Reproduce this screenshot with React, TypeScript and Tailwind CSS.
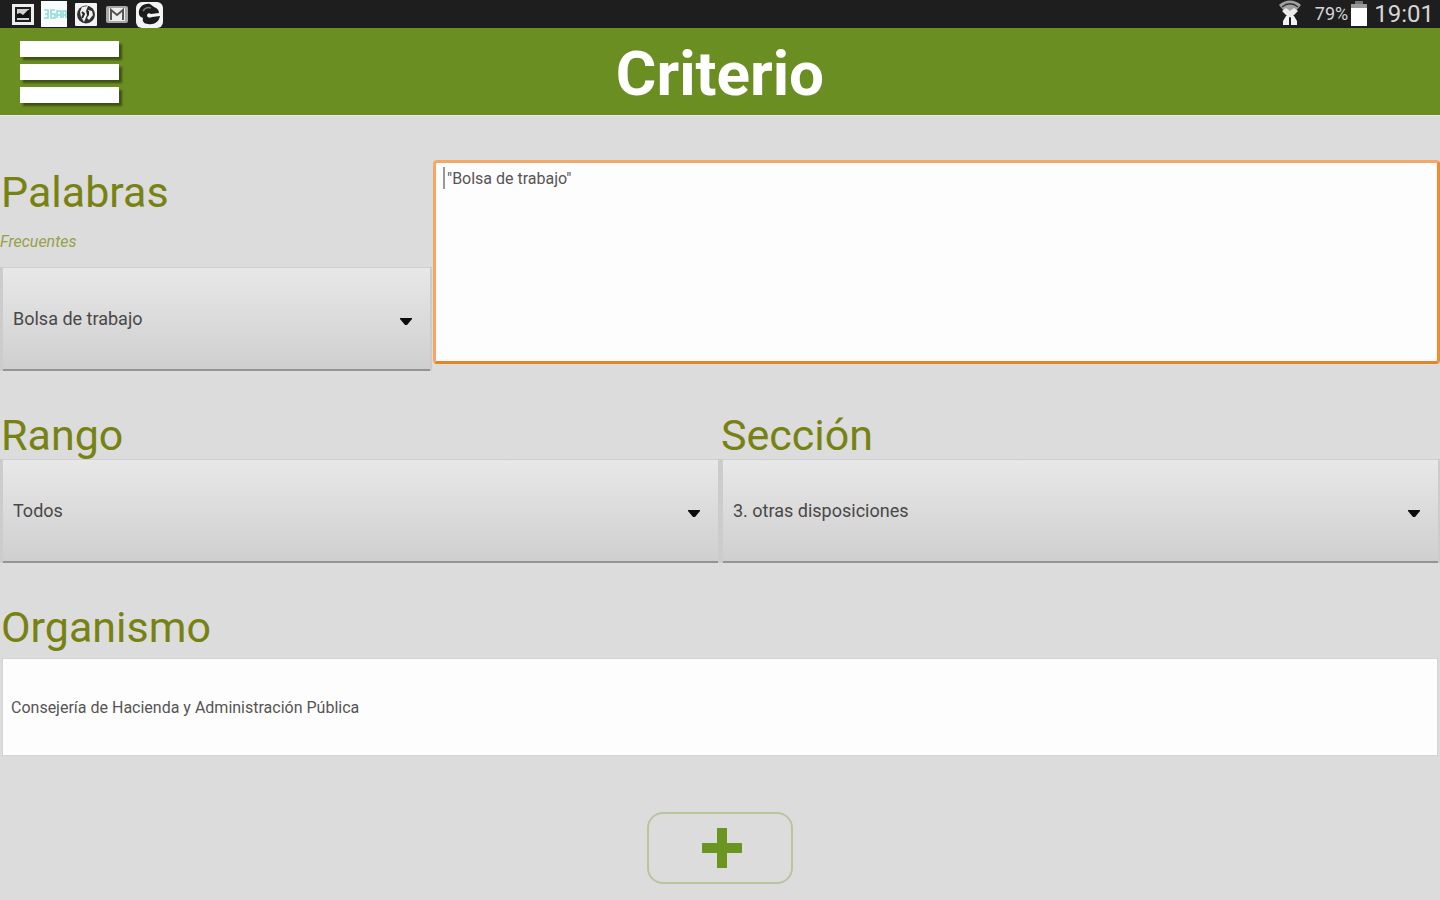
import React, { useState } from 'react'

const PALABRAS = ['Bolsa de trabajo', 'Oposiciones', 'Subvenciones', 'Becas']
const RANGOS = ['Todos', 'Ley', 'Decreto', 'Orden', 'Resolución']
const SECCIONES = ['1. disposiciones generales', '2. autoridades y personal', '3. otras disposiciones']

function StatusBar() {
  return (
    <div className="flex h-7 items-center justify-between bg-[#1e1e1e] pl-3 pr-[6px] text-[#d6d6d6]">
      <div className="flex items-center gap-[7px]">
        <svg width="22" height="22" viewBox="0 0 22 22" aria-hidden="true">
          <rect x="1.5" y="2.5" width="19" height="18" fill="#1e1e1e" stroke="#eee" strokeWidth="3" />
          <rect x="5" y="6" width="12" height="11" fill="#d0d0d0" />
          <path d="M5 15v-4l3-1 3 2 5-5h1v8z" fill="#111" />
        </svg>
        <svg width="26" height="26" viewBox="0 0 26 26" aria-hidden="true">
          <rect width="26" height="26" fill="#f8fcfc" />
          <path d="M3 9h4v4H4M7 13v4H3M14 9h-4v8h4v-4h-4M16 17v-7h4v7M16 14h4M22 17v-7h3v7M22 14h3" fill="none" stroke="#8fdcd6" strokeWidth="1.6" />
        </svg>
        <svg width="24" height="24" viewBox="0 0 24 24" aria-hidden="true">
          <rect x="1" y="1" width="22" height="23" rx="1" fill="#f4f4f4" />
          <circle cx="12" cy="12.500" r="9" fill="#303030" />
          <path d="M8 5l6-1-2 5 1 4-3 7-3-5-1-5z" fill="#f0f0f0" />
          <path d="M14 8l4 1 1 4-4 5-2-2 2-3z" fill="#f0f0f0" />
          <path d="M8 10l2 2-2 4M14 9v4" fill="none" stroke="#242424" strokeWidth="2" />
        </svg>
        <svg width="24" height="20" viewBox="0 0 24 20" aria-hidden="true">
          <rect x="1" y="2" width="22" height="17" rx="2" fill="#a8a8a8" />
          <rect x="4" y="4" width="16" height="13" fill="#eee" />
          <path d="M6 16V6l6 5 6-5v10" fill="none" stroke="#555" strokeWidth="2" />
        </svg>
        <svg width="27" height="27" viewBox="0 0 27 27" aria-hidden="true">
          <rect x="0" y="1" width="27" height="26" rx="6" fill="#f4f4f4" />
          <path d="M3 13C2 6 8 2 14 3l4 3c3 1 5 3 5 6l-8 1c-2-1-3-1-4 1 0 3 3 3 5 2l8-1c-1 6-6 9-12 8-4 0-6-3-5-6-2-1-4-2-4-4z" fill="#1c1c1c" />
          <path d="M7 10c2-3 5-4 8-3" fill="none" stroke="#777" strokeWidth="1.5" />
        </svg>
      </div>
      <div className="flex items-center">
        <svg width="26" height="28" viewBox="0 0 26 28" aria-hidden="true">
          <path d="M2 5C8-1 18-1 24 5L13 18z" fill="#a0a0a0" />
          <path d="M5 7c5-4 11-4 16 0" fill="none" stroke="#333" strokeWidth="1.5" />
          <path d="M9 8l4 3 4-3 4 3-6 6h-4l-6-6z" fill="#ececec" />
          <path d="M9 16h3v9H6v-4zM14 16h3l3 5v4h-6z" fill="#f4f4f4" />
        </svg>
        <span className="ml-3 text-[18px] leading-7">79%</span>
        <svg className="ml-[2px]" width="18" height="28" viewBox="0 0 18 28" aria-hidden="true">
          <rect x="5" y="1" width="8" height="4" fill="#777" />
          <rect x="1" y="4" width="16" height="22" fill="#fff" />
          <rect x="1" y="4" width="16" height="4" fill="#999" />
        </svg>
        <span className="ml-[6px] text-2xl leading-7">19:01</span>
      </div>
    </div>
  )
}

type SpinnerProps = {
  id: string
  value: string
  options: string[]
  onChange: (v: string) => void
}

function Spinner({ id, value, options, onChange }: SpinnerProps) {
  return (
    <div className="relative border-l-3 border-r-2 border-[#cccccc]">
      <select
        id={id}
        value={value}
        onChange={e => onChange(e.target.value)}
        className="block h-[104px] w-full appearance-none rounded-none border-b-2 border-t border-b-[#949494] border-t-[#d0d0d0] bg-linear-to-b from-[#e8e8e8] to-[#cfcfcf] px-[10px] text-[18px] text-[#484848] outline-none"
      >
        {options.map(o => <option key={o} value={o}>{o}</option>)}
      </select>
      <svg className="pointer-events-none absolute right-[18px] top-[51px]" width="12" height="8" viewBox="0 0 12 8" aria-hidden="true">
        <path d="M0 0h12v1L7 7H5L0 1z" fill="#0c0c0c" />
      </svg>
    </div>
  )
}

const heading = 'block pl-[1px] text-[43px] leading-[48px] text-[#788213]'

export default function App() {
  const [frecuente, setFrecuente] = useState('Bolsa de trabajo')
  const [palabras, setPalabras] = useState('"Bolsa de trabajo"')
  const [rango, setRango] = useState('Todos')
  const [seccion, setSeccion] = useState('3. otras disposiciones')
  const [organismo, setOrganismo] = useState('Consejería de Hacienda y Administración Pública')

  return (
    <div className="min-h-screen bg-[#dcdcdc] font-[Roboto,sans-serif]">
      <StatusBar />

      <header className="grid h-[88px] grid-cols-[1fr_auto_1fr] items-center border-b border-[#e8e8e8] bg-[#6b8e23] px-5">
        <button type="button" aria-label="Menú" className="flex w-[99px] flex-col gap-[7px]">
          <span className="h-4 w-full bg-white shadow-[3px_3px_2px_#3c5210]" />
          <span className="h-4 w-full bg-white shadow-[3px_3px_2px_#3c5210]" />
          <span className="h-4 w-full bg-white shadow-[3px_3px_2px_#3c5210]" />
        </button>
        <h1 className="pt-1 text-[62px] font-bold leading-[72px] text-white">Criterio</h1>
      </header>

      <main className="flex flex-col gap-10 pt-11">
        <div className="flex items-start gap-px">
          <div className="w-[30%] pt-2">
            <label htmlFor="palabras" className={heading}>Palabras</label>
            <label htmlFor="frecuentes" className="mb-[15px] mt-4 block text-[16px] italic leading-5 text-[#98a04a]">Frecuentes</label>
            <Spinner id="frecuentes" value={frecuente} options={PALABRAS} onChange={setFrecuente} />
          </div>
          <div className="relative flex-1">
            <textarea
              id="palabras"
              value={palabras}
              onChange={e => setPalabras(e.target.value)}
              className="block h-[204px] w-full resize-none rounded-sm border-3 border-[#f4a864] border-b-[#e88428] border-r-[#f08c2c] bg-[#fdfdfd] px-[11px] py-[6px] text-[16px] leading-5 text-[#555] outline-none"
            />
            {/* text cursor */}
            <span className="pointer-events-none absolute left-[10px] top-[7px] h-[22px] w-[2px] bg-[#999]" />
          </div>
        </div>

        <div className="grid grid-cols-2">
          <div>
            <label htmlFor="rango" className={heading}>Rango</label>
            <Spinner id="rango" value={rango} options={RANGOS} onChange={setRango} />
          </div>
          <div>
            <label htmlFor="seccion" className={heading}>Sección</label>
            <Spinner id="seccion" value={seccion} options={SECCIONES} onChange={setSeccion} />
          </div>
        </div>

        <div>
          <label htmlFor="organismo" className={heading}>Organismo</label>
          <div className="mt-[7px] px-[2px]">
            <input
              id="organismo"
              type="text"
              value={organismo}
              onChange={e => setOrganismo(e.target.value)}
              className="block h-[98px] w-full border border-[#d4d4d4] bg-[#fdfdfd] px-2 text-[16px] text-[#555] outline-none"
            />
          </div>
        </div>

        <button
          type="button"
          aria-label="Añadir"
          className="mx-auto mt-4 flex h-[72px] w-[146px] items-center justify-center rounded-2xl border-2 border-[#b9c59c]"
        >
          <svg className="ml-1" width="40" height="40" viewBox="0 0 40 40" aria-hidden="true">
            <path d="M15 0h10v15h15v10H25v15H15V25H0V15h15z" fill="#6b9420" />
          </svg>
        </button>
      </main>
    </div>
  )
}
